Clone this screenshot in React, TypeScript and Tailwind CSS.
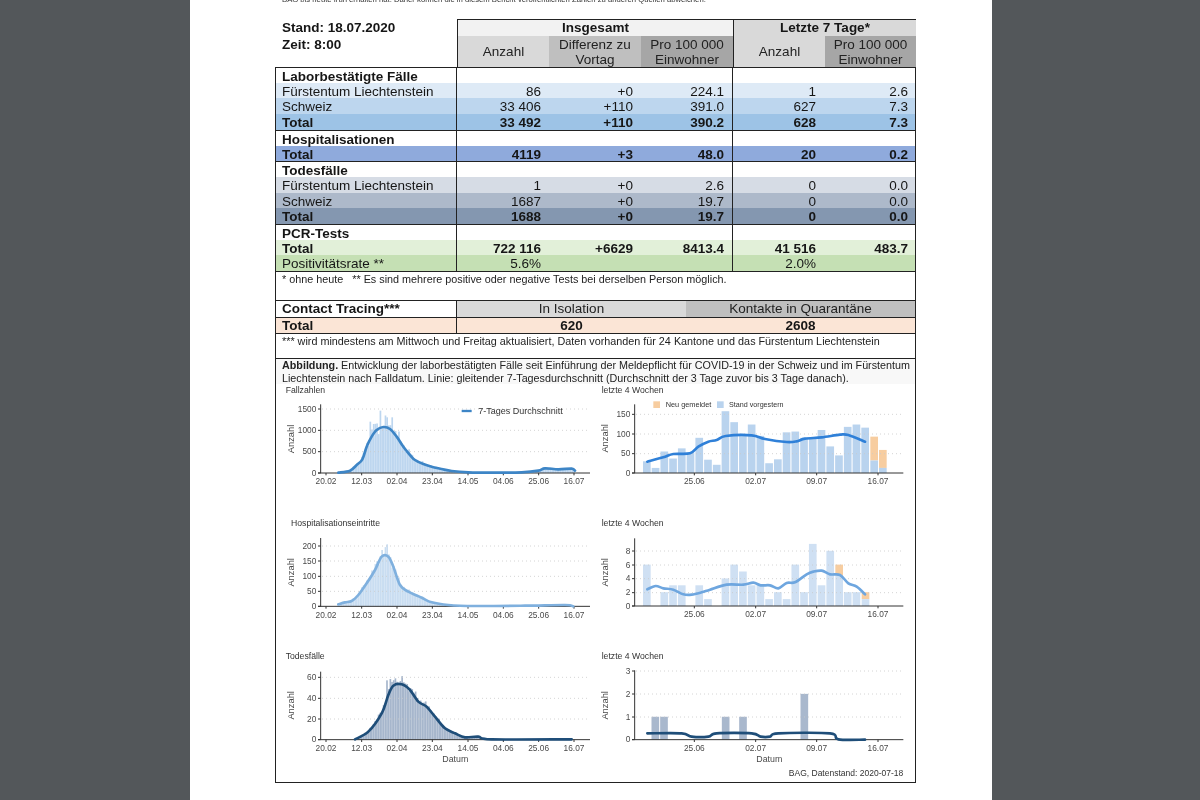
import React from "react";

type Pt = [number, number];

const interp = (pts: Pt[], x: number) => {
  if (x <= pts[0][0]) return pts[0][1];
  for (let i = 1; i < pts.length; i++) {
    if (x <= pts[i][0]) {
      const [a, b] = pts[i - 1];
      const [c, d] = pts[i];
      return b + ((d - b) * (x - a)) / (c - a);
    }
  }
  return pts[pts.length - 1][1];
};

const smooth = (pts: Pt[]) => {
  let d = `M${pts[0][0]} ${pts[0][1]}`;
  for (let i = 0; i < pts.length - 1; i++) {
    const p0 = pts[Math.max(0, i - 1)];
    const p1 = pts[i];
    const p2 = pts[i + 1];
    const p3 = pts[Math.min(pts.length - 1, i + 2)];
    const c1x = p1[0] + (p2[0] - p0[0]) / 6;
    const c1y = p1[1] + (p2[1] - p0[1]) / 6;
    const c2x = p2[0] - (p3[0] - p1[0]) / 6;
    const c2y = p2[1] - (p3[1] - p1[1]) / 6;
    d += ` C${c1x} ${c1y} ${c2x} ${c2y} ${p2[0]} ${p2[1]}`;
  }
  return d;
};

const AX = "#333333";
const LBL = "#4a4a4a";

function Axes({
  x0,
  base,
  top,
  end,
  yTicks,
  xTicks,
  anzahlX,
  anzahlY,
}: {
  x0: number;
  base: number;
  top: number;
  end: number;
  yTicks: [string, number][];
  xTicks: [string, number][];
  anzahlX: number;
  anzahlY: number;
}) {
  return (
    <g>
      {yTicks.map(([l, y]) =>
        l === "0" ? null : (
          <line key={l} x1={x0 + 4} x2={end} y1={y} y2={y} stroke="#c9c9c9" strokeWidth={2.4} strokeDasharray="3 9" />
        )
      )}
      <line x1={x0} x2={x0} y1={top} y2={base} stroke={AX} strokeWidth={3} />
      <line x1={x0 - 8} x2={end} y1={base} y2={base} stroke={AX} strokeWidth={3} />
      {yTicks.map(([l, y]) => (
        <g key={l}>
          <line x1={x0 - 8} x2={x0} y1={y} y2={y} stroke={AX} strokeWidth={3} />
          <text x={x0 - 13} y={y + 8} textAnchor="end" fontSize={25} fill={LBL}>
            {l}
          </text>
        </g>
      ))}
      {xTicks.map(([l, x]) => (
        <g key={l}>
          <line x1={x} x2={x} y1={base} y2={base + 7} stroke={AX} strokeWidth={3} />
          <text x={x} y={base + 34} textAnchor="middle" fontSize={25} fill={LBL}>
            {l}
          </text>
        </g>
      ))}
      <text
        transform={`translate(${anzahlX} ${anzahlY}) rotate(-90)`}
        textAnchor="middle"
        fontSize={28}
        fill={LBL}
      >
        Anzahl
      </text>
    </g>
  );
}

const LONG_X: [string, number][] = [
  ["20.02", 153],
  ["12.03", 260],
  ["02.04", 366],
  ["23.04", 472],
  ["14.05", 579],
  ["04.06", 685],
  ["25.06", 791],
  ["16.07", 897],
];
const SHORT_X: [string, number][] = [
  ["25.06", 298],
  ["02.07", 482],
  ["09.07", 665],
  ["16.07", 849],
];
const BAR_X = (i: number) => 155.5 + i * 26.2;

function DenseBars({
  line,
  base,
  from,
  to,
  fill,
  amp,
  peaks = {},
}: {
  line: Pt[];
  base: number;
  from: number;
  to: number;
  fill: string;
  amp: number;
  peaks?: Record<number, number>;
}) {
  const out: React.ReactElement[] = [];
  for (let x = from, i = 0; x <= to; x += 5.05, i++) {
    const h = base - interp(line, x);
    const n = 1.06 + amp * (0.55 * Math.sin(i * 2.3) + 0.45 * Math.sin(i * 0.9 + 1));
    const top = peaks[i] !== undefined ? peaks[i] : base - h * n;
    out.push(<rect key={i} x={x - 2.5} y={top} width={5.05} height={Math.max(0, base - top)} fill={fill} />);
  }
  return <g>{out}</g>;
}

function Svg({ left, y, h, children }: { left: boolean; y: number; h: number; children: React.ReactNode }) {
  return (
    <svg
      width={left ? 319 : 320}
      height={h / 3}
      viewBox={`${left ? 3 : 0} ${y} ${left ? 957 : 960} ${h}`}
      className="block"
      fontFamily="'Liberation Sans', Arial, sans-serif"
    >
      {children}
    </svg>
  );
}

const Title = ({ x, y, children }: { x: number; y: number; children: string }) => (
  <text x={x} y={y} fontSize={26} fill="#333333">
    {children}
  </text>
);

function Chart1() {
  const line: Pt[] = [[190, 278], [225, 272], [245, 255], [262, 238], [275, 200], [290, 170], [305, 150], [325, 141], [345, 147], [365, 170], [385, 200], [405, 225], [420, 240], [445, 252], [470, 260], [500, 267], [530, 273], [580, 277], [650, 278], [740, 277], [790, 272], [810, 265], [850, 268], [890, 266], [900, 272]];
  return (
    <Svg left y={12} h={393}>
      <Title x={32} y={38}>Fallzahlen</Title>
      <DenseBars line={line} base={279} from={190} to={900} fill="#bdd6ef" amp={0.22} peaks={{ 25: 92, 29: 112, 32: 112, 19: 125, 21: 132 }} />
      <Axes x0={137} base={279} top={73} end={945} anzahlX={57} anzahlY={177} xTicks={LONG_X} yTicks={[["1500", 87], ["1000", 151], ["500", 215], ["0", 279]]} />
      <path d={smooth(line)} fill="none" stroke="#3d85c6" strokeWidth={8} strokeLinecap="round" />
      <line x1={560} x2={590} y1={93} y2={93} stroke="#3d85c6" strokeWidth={7} />
      <text x={610} y={103} fontSize={27} fill="#333333">7-Tages Durchschnitt</text>
    </Svg>
  );
}

function Chart2() {
  const vals = [30, 13, 55, 37, 63, 52, 90, 34, 21, 158, 130, 100, 124, 95, 25, 35, 104, 106, 90, 90, 110, 68, 45, 118, 124, 116];
  const line: Pt[] = [[157, 245], [205, 232], [235, 222], [285, 220], [310, 200], [340, 185], [365, 180], [392, 168], [470, 166], [510, 177], [575, 186], [605, 184], [630, 176], [680, 172], [735, 164], [760, 165], [810, 185]];
  const u = 1.173;
  return (
    <Svg left={false} y={12} h={393}>
      <Title x={20} y={38}>letzte 4 Wochen</Title>
      {vals.map((v, i) => (
        <rect key={i} x={BAR_X(i) - 11.5} y={279 - v * u} width={23} height={v * u} fill="#b9d3ee" />
      ))}
      <rect x={826} y={279 - 93 * u} width={23} height={61 * u} fill="#f7cda0" />
      <rect x={826} y={279 - 32 * u} width={23} height={32 * u} fill="#b9d3ee" />
      <rect x={852} y={279 - 59 * u} width={23} height={46 * u} fill="#f7cda0" />
      <rect x={852} y={279 - 13 * u} width={23} height={13 * u} fill="#b9d3ee" />
      <Axes x0={119} base={279} top={73} end={925} anzahlX={38} anzahlY={175} xTicks={SHORT_X} yTicks={[["150", 103], ["100", 162], ["50", 221], ["0", 279]]} />
      <path d={smooth(line)} fill="none" stroke="#2f80d8" strokeWidth={8} strokeLinecap="round" />
      <rect x={175} y={64} width={20} height={20} fill="#f7cda0" />
      <text x={212} y={81} fontSize={22} fill="#333333">Neu gemeldet</text>
      <rect x={366} y={64} width={20} height={20} fill="#b9d3ee" />
      <text x={402} y={81} fontSize={21.5} fill="#333333">Stand vorgestern</text>
    </Svg>
  );
}

function Chart3() {
  const line: Pt[] = [[190, 268], [210, 262], [230, 258], [250, 240], [275, 205], [300, 165], [320, 125], [340, 125], [355, 155], [375, 210], [400, 230], [440, 248], [470, 262], [520, 270], [600, 273], [750, 272], [870, 270], [895, 274]];
  return (
    <Svg left y={0} h={390}>
      <Title x={48} y={33}>Hospitalisationseintritte</Title>
      <DenseBars line={line} base={274} from={190} to={900} fill="#c9ddf1" amp={0.14} peaks={{ 26: 105, 29: 88 }} />
      <Axes x0={137} base={274} top={69} end={945} anzahlX={57} anzahlY={172} xTicks={LONG_X} yTicks={[["200", 93], ["150", 138], ["100", 184], ["50", 229], ["0", 274]]} />
      <path d={smooth(line)} fill="none" stroke="#7fb0de" strokeWidth={8} strokeLinecap="round" />
    </Svg>
  );
}

function Chart4() {
  const vals = [6, 0, 2, 3, 3, 0, 3, 1, 0, 4, 6, 5, 3, 3, 1, 2, 1, 6, 2, 9, 3, 8, 0, 2, 2, 0];
  const line: Pt[] = [[157, 223], [182, 213], [205, 220], [235, 224], [265, 238], [290, 239], [320, 232], [345, 224], [395, 209], [445, 209], [475, 203], [497, 211], [525, 211], [550, 220], [575, 204], [600, 202], [635, 178], [655, 170], [680, 167], [705, 178], [735, 180], [760, 205], [785, 215], [810, 238]];
  const u = 20.7;
  return (
    <Svg left={false} y={0} h={390}>
      <Title x={20} y={33}>letzte 4 Wochen</Title>
      {vals.map((v, i) => (
        <rect key={i} x={BAR_X(i) - 11.5} y={273 - v * u} width={23} height={v * u} fill="#cfe0f3" />
      ))}
      <rect x={721} y={273 - 6 * u} width={23} height={1.6 * u} fill="#f7cda0" />
      <rect x={721} y={273 - 4.4 * u} width={23} height={4.4 * u} fill="#cfe0f3" />
      <rect x={800} y={273 - 2 * u} width={23} height={1 * u} fill="#f7cda0" />
      <rect x={800} y={273 - 1 * u} width={23} height={1 * u} fill="#cfe0f3" />
      <Axes x0={119} base={273} top={70} end={925} anzahlX={38} anzahlY={172} xTicks={SHORT_X} yTicks={[["8", 108], ["6", 150], ["4", 191], ["2", 233], ["0", 273]]} />
      <path d={smooth(line)} fill="none" stroke="#6ea6df" strokeWidth={8} strokeLinecap="round" />
    </Svg>
  );
}

function Chart5() {
  const line: Pt[] = [[240, 283], [280, 260], [320, 205], [340, 150], [355, 122], [380, 118], [405, 135], [430, 170], [455, 185], [480, 215], [510, 250], [540, 265], [570, 277], [610, 275], [650, 283], [890, 283]];
  return (
    <Svg left y={0} h={411}>
      <Title x={32} y={42}>Todesfälle</Title>
      <DenseBars line={line} base={284} from={240} to={640} fill="#a6b6cc" amp={0.1} peaks={{ 19: 106, 21: 102, 24: 100, 27: 108 }} />
      <Axes x0={137} base={284} top={80} end={945} anzahlX={57} anzahlY={181} xTicks={LONG_X} yTicks={[["60", 97], ["40", 160], ["20", 222], ["0", 284]]} />
      <path d={smooth(line)} fill="none" stroke="#1f4e79" strokeWidth={8} strokeLinecap="round" />
      <text x={541} y={350} textAnchor="middle" fontSize={26.5} fill={LBL}>Datum</text>
    </Svg>
  );
}

function Chart6() {
  const line: Pt[] = [[157, 265], [260, 265], [290, 275], [340, 275], [365, 265], [470, 265], [497, 275], [525, 275], [550, 265], [705, 265], [730, 283], [810, 284]];
  const bars: [number, number][] = [[181, 1], [207, 1], [392, 1], [444, 1], [628, 2]];
  return (
    <Svg left={false} y={0} h={411}>
      <Title x={20} y={42}>letzte 4 Wochen</Title>
      {bars.map(([x, v]) => (
        <rect key={x} x={x - 11.5} y={284 - v * 68.7} width={23} height={v * 68.7} fill="#a9b8cd" />
      ))}
      <Axes x0={119} base={284} top={76} end={925} anzahlX={38} anzahlY={181} xTicks={SHORT_X} yTicks={[["3", 78], ["2", 147], ["1", 216], ["0", 284]]} />
      <path d={smooth(line)} fill="none" stroke="#1f4e79" strokeWidth={8} strokeLinecap="round" />
      <text x={523} y={350} textAnchor="middle" fontSize={26.5} fill={LBL}>Datum</text>
      <text x={925} y={392} textAnchor="end" fontSize={25.6} fill="#333333">BAG, Datenstand: 2020-07-18</text>
    </Svg>
  );
}

const COLS = "grid grid-cols-[181px_91px_92px_93px_91px_91px]";

function Row({
  label,
  vals = ["", "", "", "", ""],
  bg = "bg-white",
  h,
  bold,
}: {
  label: string;
  vals?: string[];
  bg?: string;
  h: string;
  bold?: boolean;
}) {
  const w = bold ? "font-bold" : "";
  return (
    <div className={`${COLS} ${bg} ${h} text-[13.5px] leading-none text-[#161616]`}>
      <div className={`flex items-center border-r border-[#222] pt-[2px] pl-[6px] whitespace-nowrap ${w}`}>{label}</div>
      <div className={`flex items-center justify-end pt-[2px] pr-[7px] ${w}`}>{vals[0]}</div>
      <div className={`flex items-center justify-end pt-[2px] pr-[7px] ${w}`}>{vals[1]}</div>
      <div className={`flex items-center justify-end border-r border-[#222] pt-[2px] pr-[8px] ${w}`}>{vals[2]}</div>
      <div className={`flex items-center justify-end pt-[2px] pr-[8px] ${w}`}>{vals[3]}</div>
      <div className={`flex items-center justify-end pt-[2px] pr-[7px] ${w}`}>{vals[4]}</div>
    </div>
  );
}

const HeadCell = ({ bg, children, cls = "" }: { bg: string; children: React.ReactNode; cls?: string }) => (
  <div className={`flex items-center justify-center text-center text-[13.5px] leading-[15px] text-[#222] ${bg} ${cls}`}>{children}</div>
);

export default function App() {
  return (
    <div className="h-[800px] w-[1200px] overflow-hidden bg-[#53575a] font-['Liberation_Sans',Arial,sans-serif]">
      <div className="ml-[190px] h-[800px] w-[802px] bg-white blur-[0.35px]">
        <div className="flex h-[4px] items-end overflow-hidden pl-[92px] text-[7.7px] leading-none whitespace-nowrap text-[#333]">
          BAG bis heute früh erhalten hat. Daher können die in diesem Bericht veröffentlichten Zahlen zu anderen Quellen abweichen.
        </div>
        <div className="ml-[85px] w-[641px] pt-[15px]">
          {/* Header */}
          <div className="grid grid-cols-[182px_459px]">
            <div className="pl-[7px] text-[13.5px] leading-[17px] font-bold text-[#161616]">
              <div>Stand: 18.07.2020</div>
              <div>Zeit: 8:00</div>
            </div>
            <div className="grid grid-cols-[91px_92px_93px_91px_91px] border-t border-r border-l border-[#222]">
              <div className="col-span-3 flex h-[16px] items-center justify-center border-r border-[#222] bg-[#f2f2f2] text-[13.5px] leading-none font-bold text-[#161616]">
                Insgesamt
              </div>
              <div className="col-span-2 flex h-[16px] items-center justify-center bg-[#d9d9d9] text-[13.5px] leading-none font-bold text-[#161616]">
                Letzte 7 Tage*
              </div>
              <HeadCell bg="bg-[#d9d9d9]" cls="h-[31px]">Anzahl</HeadCell>
              <HeadCell bg="bg-[#bfbfbf]">Differenz zu<br />Vortag</HeadCell>
              <HeadCell bg="bg-[#a6a6a6]" cls="border-r border-[#222]">Pro 100 000<br />Einwohner</HeadCell>
              <HeadCell bg="bg-[#d9d9d9]">Anzahl</HeadCell>
              <HeadCell bg="bg-[#a6a6a6]">Pro 100 000<br />Einwohner</HeadCell>
            </div>
          </div>

          <div className="border border-[#222] bg-white">
            <div className="border-b border-[#222]">
              <Row h="h-[15px]" bold label="Laborbestätigte Fälle" />
              <Row h="h-[15px]" bg="bg-[#deeaf6]" label="Fürstentum Liechtenstein" vals={["86", "+0", "224.1", "1", "2.6"]} />
              <Row h="h-[16px]" bg="bg-[#bdd6ee]" label="Schweiz" vals={["33 406", "+110", "391.0", "627", "7.3"]} />
              <Row h="h-[16px]" bold bg="bg-[#9dc3e6]" label="Total" vals={["33 492", "+110", "390.2", "628", "7.3"]} />
            </div>
            <div className="border-b border-[#222]">
              <Row h="h-[15px]" bold label="Hospitalisationen" />
              <Row h="h-[15px]" bold bg="bg-[#8faadc]" label="Total" vals={["4119", "+3", "48.0", "20", "0.2"]} />
            </div>
            <div className="border-b border-[#222]">
              <Row h="h-[15px]" bold label="Todesfälle" />
              <Row h="h-[16px]" bg="bg-[#d6dce5]" label="Fürstentum Liechtenstein" vals={["1", "+0", "2.6", "0", "0.0"]} />
              <Row h="h-[15px]" bg="bg-[#adb9ca]" label="Schweiz" vals={["1687", "+0", "19.7", "0", "0.0"]} />
              <Row h="h-[16px]" bold bg="bg-[#8497b0]" label="Total" vals={["1688", "+0", "19.7", "0", "0.0"]} />
            </div>
            <div className="border-b border-[#222]">
              <Row h="h-[15px]" bold label="PCR-Tests" />
              <Row h="h-[15px]" bold bg="bg-[#e2f0d9]" label="Total" vals={["722 116", "+6629", "8413.4", "41 516", "483.7"]} />
              <Row h="h-[16px]" bg="bg-[#c5e0b4]" label="Positivitätsrate **" vals={["5.6%", "", "", "2.0%", ""]} />
            </div>
            <div className="h-[29px] border-b border-[#222] pl-[6px] text-[10.8px] leading-[14px] whitespace-pre text-[#222]">
              {"* ohne heute   ** Es sind mehrere positive oder negative Tests bei derselben Person möglich."}
            </div>

            {/* Contact tracing */}
            <div className="grid h-[17px] grid-cols-[181px_229px_229px] border-b border-[#222]">
              <div className="flex items-center border-r border-[#222] pl-[6px] text-[13.5px] leading-none font-bold text-[#161616]">Contact Tracing***</div>
              <div className="flex items-center justify-center bg-[#d9d9d9] text-[13.5px] leading-none text-[#222]">In Isolation</div>
              <div className="flex items-center justify-center bg-[#bfbfbf] text-[13.5px] leading-none text-[#222]">Kontakte in Quarantäne</div>
            </div>
            <div className="grid h-[16px] grid-cols-[181px_229px_229px] border-b border-[#222] bg-[#fbe5d6] text-[13.5px] leading-none font-bold text-[#161616]">
              <div className="flex items-center border-r border-[#222] pl-[6px]">Total</div>
              <div className="flex items-center justify-center">620</div>
              <div className="flex items-center justify-center">2608</div>
            </div>
            <div className="h-[25px] border-b border-[#222] pl-[6px] text-[10.8px] leading-[14px] text-[#222]">
              *** wird mindestens am Mittwoch und Freitag aktualisiert, Daten vorhanden für 24 Kantone und das Fürstentum Liechtenstein
            </div>

            {/* Figure */}
            <div className="h-[25px] bg-[#f8f8f8] pl-[6px] text-[10.75px] leading-[12.5px] text-[#222]">
              <b>Abbildung.</b> Entwicklung der laborbestätigten Fälle seit Einführung der Meldepflicht für COVID-19 in der Schweiz und im Fürstentum
              <br />
              Liechtenstein nach Falldatum. Linie: gleitender 7-Tagesdurchschnitt (Durchschnitt der 3 Tage zuvor bis 3 Tage danach).
            </div>
            <div className="grid grid-cols-[319px_320px]">
              <Chart1 />
              <Chart2 />
              <Chart3 />
              <Chart4 />
              <Chart5 />
              <Chart6 />
            </div>
          </div>
        </div>
      </div>
    </div>
  );
}
